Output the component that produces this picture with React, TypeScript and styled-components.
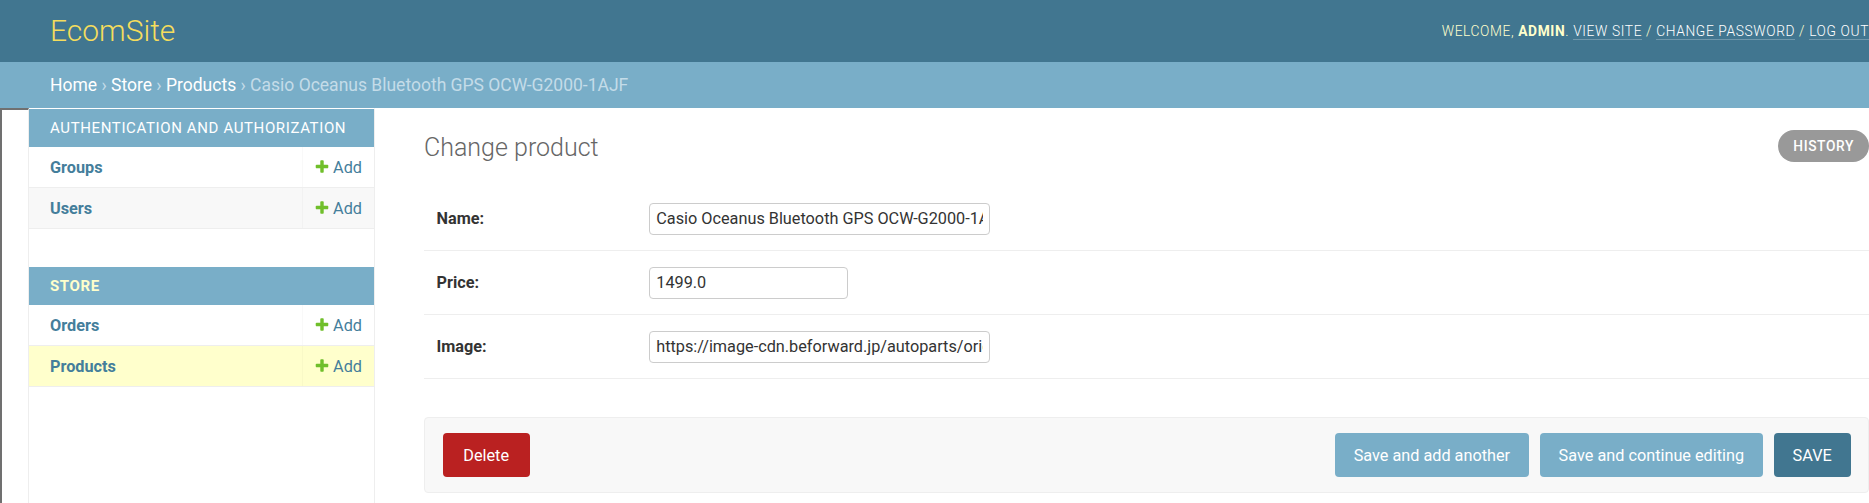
import React from "react";
import styled, { createGlobalStyle } from "styled-components";

const GlobalStyle = createGlobalStyle`
  html, body { margin: 0; padding: 0; overflow: hidden; background: #fff; }
  body { font-family: Roboto, "Liberation Sans", Arial, sans-serif; font-size: 17.5px; color: #333; }
  * { box-sizing: border-box; }
`;

const Page = styled.div`
  width: 1919px;
  min-height: 503px;
  display: flex;
  flex-direction: column;
`;

const Header = styled.header`
  height: 62px;
  padding: 0 50px;
  display: flex;
  align-items: center;
  justify-content: space-between;
  background: #417690;
`;

const Branding = styled.h1`
  margin: 0;
  font-size: 30px;
  font-weight: 300;
  color: #f5dd5d;
  line-height: 1;
`;

const UserTools = styled.div`
  font-size: 13.75px;
  font-weight: 300;
  letter-spacing: 0.625px;
  text-transform: uppercase;
  color: #ffc;
  white-space: nowrap;
  strong { font-weight: 700; }
`;

const ToolLink = styled.a`
  color: #fff;
  text-decoration: none;
  border-bottom: 1px solid rgba(255, 255, 255, 0.25);
`;

const Breadcrumbs = styled.nav`
  height: 46px;
  padding: 0 50px;
  display: flex;
  align-items: center;
  background: #79aec8;
  color: #c4dce8;
  font-size: 17.5px;
  white-space: pre;
`;

const Crumb = styled.a`
  color: #fff;
  text-decoration: none;
`;

const Main = styled.div`
  flex: 1;
  display: flex;
  min-height: 395px;
`;

const ToggleNav = styled.div`
  flex: 0 0 29px;
  border-left: 2px solid #707070;
  border-top: 2px solid #707070;
  border-right: 1px solid #eee;
  background: #fff;
`;

const NavSidebar = styled.aside`
  flex: 0 0 346px;
  border-right: 1px solid #eee;
  border-top: 1px solid transparent;
`;

const Module = styled.div`
  margin-bottom: 38px;
`;

const Caption = styled.div<{ $current?: boolean }>`
  height: 38px;
  padding: 0 21px;
  display: flex;
  align-items: center;
  background: #79aec8;
  color: ${(p) => (p.$current ? "#ffc" : "#fff")};
  font-size: 15px;
  font-weight: ${(p) => (p.$current ? 700 : 400)};
  letter-spacing: 0.625px;
  text-transform: uppercase;
`;

const NavRow = styled.div<{ $bg: string }>`
  height: 41px;
  display: flex;
  align-items: stretch;
  border-bottom: 1px solid #eee;
  background: ${(p) => p.$bg};
`;

const ModelCell = styled.div`
  flex: 1;
  display: flex;
  align-items: center;
  padding-left: 21px;
`;

const AddCell = styled.div`
  display: flex;
  align-items: center;
  padding: 0 12px 0 11px;
  border-left: 1px solid rgba(0, 0, 0, 0.025);
`;

const ModelLink = styled.a`
  font-size: 16.25px;
  font-weight: 700;
  color: #447e9b;
  text-decoration: none;
`;

const AddLink = styled.a`
  display: inline-flex;
  align-items: center;
  gap: 3px;
  font-size: 16.25px;
  color: #447e9b;
  text-decoration: none;
`;

const Content = styled.main`
  flex: 1;
  padding: 25px 50px 0 49px;
`;

const TitleRow = styled.div`
  display: flex;
  justify-content: space-between;
  align-items: flex-start;
  margin-bottom: 24px;
`;

const Title = styled.h1`
  margin: 0;
  font-size: 25px;
  font-weight: 300;
  color: #666;
  line-height: 30px;
`;

const HistoryButton = styled.a`
  margin-top: -3px;
  height: 32px;
  padding: 0 15px;
  border-radius: 16px;
  background: #999;
  color: #fff;
  font-size: 13.75px;
  font-weight: 500;
  letter-spacing: 0.625px;
  text-transform: uppercase;
  display: flex;
  align-items: center;
  text-decoration: none;
`;

const Fieldset = styled.fieldset`
  border: none;
  margin: 0 0 38px;
  padding: 0;
`;

const FormRow = styled.div`
  display: flex;
  align-items: center;
  padding: 15.5px 12.5px;
  border-bottom: 1px solid #eee;
`;

const Label = styled.label`
  flex: 0 0 212.5px;
  font-size: 16.25px;
  font-weight: 700;
  color: #333;
`;

const TextInput = styled.input<{ $w: number }>`
  width: ${(p) => p.$w}px;
  height: 32px;
  border: 1px solid #ccc;
  border-radius: 4px;
  padding: 0 6.25px;
  font-family: Roboto, "Liberation Sans", Arial, sans-serif;
  font-size: 16.25px;
  color: #333;
  background: #fff;
  outline: none;
`;

const SubmitRow = styled.div`
  display: flex;
  align-items: center;
  gap: 11px;
  padding: 15px 17.5px;
  background: #f8f8f8;
  border: 1px solid #eee;
  border-radius: 4px;
`;

const Button = styled.button<{ $bg: string; $push?: boolean }>`
  height: 44px;
  padding: 0 ${(p) => (p.$push ? "20.75px" : "18.75px")};
  border: none;
  border-radius: 4px;
  background: ${(p) => p.$bg};
  color: #fff;
  font-family: Roboto, "Liberation Sans", Arial, sans-serif;
  font-size: 16.25px;
  margin-right: ${(p) => (p.$push ? "auto" : "0")};
  cursor: pointer;
`;

const PlusIcon = () => (
  <svg width="16" height="16" viewBox="0 0 1792 1792" aria-hidden="true">
    <path
      fill="#70bf2b"
      d="M1600 736v192q0 40-28 68t-68 28h-416v416q0 40-28 68t-68 28h-192q-40 0-68-28t-28-68v-416h-416q-40 0-68-28t-28-68v-192q0-40 28-68t68-28h416v-416q0-40 28-68t68-28h192q40 0 68 28t28 68v416h416q40 0 68 28t28 68z"
    />
  </svg>
);

type NavModule = { name: string; current?: boolean; models: { name: string; bg: string }[] };

const modules: NavModule[] = [
  {
    name: "Authentication and Authorization",
    models: [
      { name: "Groups", bg: "#fff" },
      { name: "Users", bg: "#f8f8f8" },
    ],
  },
  {
    name: "Store",
    current: true,
    models: [
      { name: "Orders", bg: "#fff" },
      { name: "Products", bg: "#ffc" },
    ],
  },
];

export default function App() {
  return (
    <>
      <GlobalStyle />
      <Page>
        <Header>
          <Branding>EcomSite</Branding>
          <UserTools>
            Welcome, <strong>admin</strong>. <ToolLink href="#">View site</ToolLink> /{" "}
            <ToolLink href="#">Change password</ToolLink> / <ToolLink href="#">Log out</ToolLink>
          </UserTools>
        </Header>
        <Breadcrumbs>
          <Crumb href="#">Home</Crumb>
          {" › "}
          <Crumb href="#">Store</Crumb>
          {" › "}
          <Crumb href="#">Products</Crumb>
          {" › Casio Oceanus Bluetooth GPS OCW-G2000-1AJF"}
        </Breadcrumbs>
        <Main>
          <ToggleNav />
          <NavSidebar>
            {modules.map((m) => (
              <Module key={m.name}>
                <Caption $current={m.current}>{m.name}</Caption>
                {m.models.map((model) => (
                  <NavRow key={model.name} $bg={model.bg}>
                    <ModelCell>
                      <ModelLink href="#">{model.name}</ModelLink>
                    </ModelCell>
                    <AddCell>
                      <AddLink href="#">
                        <PlusIcon />
                        Add
                      </AddLink>
                    </AddCell>
                  </NavRow>
                ))}
              </Module>
            ))}
          </NavSidebar>
          <Content>
            <TitleRow>
              <Title>Change product</Title>
              <HistoryButton href="#">History</HistoryButton>
            </TitleRow>
            <Fieldset>
              <FormRow>
                <Label>Name:</Label>
                <TextInput $w={341} defaultValue="Casio Oceanus Bluetooth GPS OCW-G2000-1AJF" />
              </FormRow>
              <FormRow>
                <Label>Price:</Label>
                <TextInput $w={199} defaultValue="1499.0" />
              </FormRow>
              <FormRow>
                <Label>Image:</Label>
                <TextInput $w={341} defaultValue="https://image-cdn.beforward.jp/autoparts/original/casio-oceanus.jpg" />
              </FormRow>
            </Fieldset>
            <SubmitRow>
              <Button $bg="#ba2121" $push>Delete</Button>
              <Button $bg="#79aec8">Save and add another</Button>
              <Button $bg="#79aec8">Save and continue editing</Button>
              <Button $bg="#417690">SAVE</Button>
            </SubmitRow>
          </Content>
        </Main>
      </Page>
    </>
  );
}
